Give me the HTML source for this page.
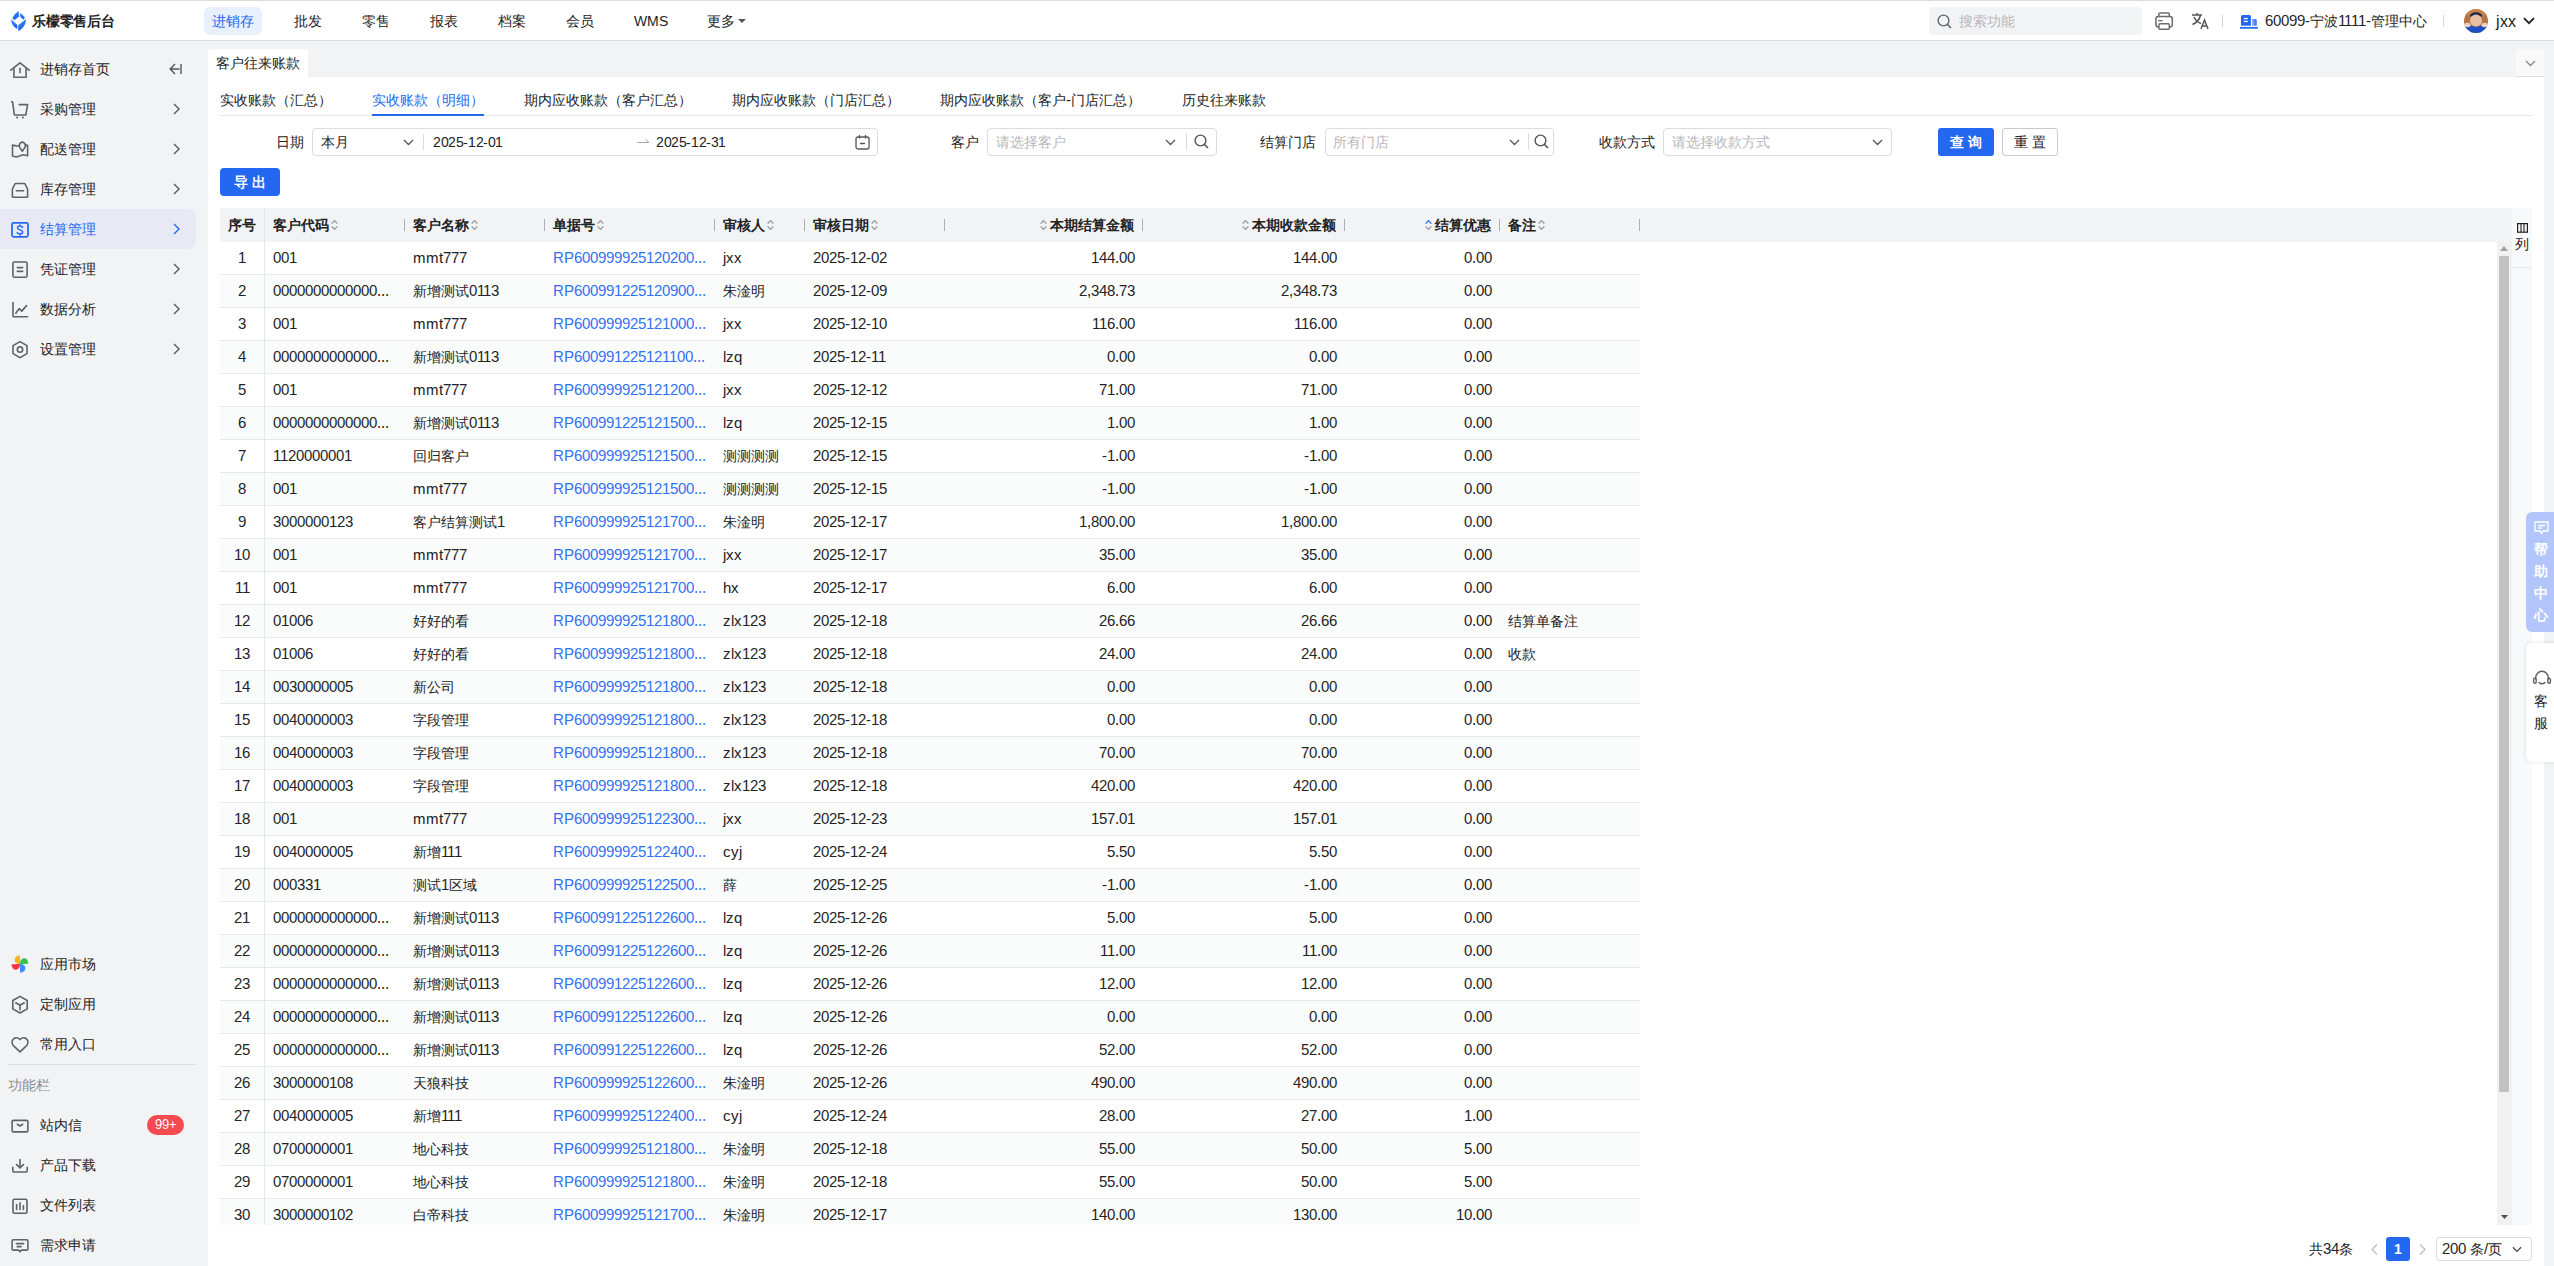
<!DOCTYPE html><html><head><meta charset="utf-8"><style>
@font-face{font-family:"Liberation Sans";src:local("Liberation Sans"),local("LiberationSans");size-adjust:107%}
@font-face{font-family:"Liberation Sans";font-weight:bold;src:local("Liberation Sans Bold"),local("LiberationSans-Bold");size-adjust:107%}
*{box-sizing:border-box;margin:0;padding:0}
html,body{width:2554px;height:1266px;overflow:hidden}
body{position:relative;background:#f2f3f5;font-family:"Liberation Sans",sans-serif;font-size:14px;color:#222;}
.a{position:absolute;white-space:nowrap}
.a>svg{display:block}
.vc{display:flex;align-items:center}
#hdr{left:0;top:0;width:2554px;height:40px;background:#fff;border-top:1px solid #dcdcdc}
#hline{left:0;top:40px;width:2554px;height:1px;background:#dcdcdc}
.nav{top:7px;height:28px;line-height:28px;font-size:14px;color:#222}
.sb{left:0;width:208px;height:40px}
.sbt{left:40px;margin-top:1px;line-height:40px;font-size:14px;color:#222}
.sbi{left:11px}
.sbc{left:173px}
.box{height:28px;border:1px solid #dcdcdc;border-radius:4px;background:#fff}
.lbl{height:28px;line-height:28px;color:#222}
.ph{color:#b8b8b8}
.th{top:208px;height:34px;line-height:34px;font-weight:bold;color:#222}
.si{position:relative;top:1px}
.rd{position:absolute;top:219px;width:1px;height:12px;background:#a9aeba}
.row{position:absolute;left:220px;width:1420px;height:33px;border-bottom:1px solid #e8e8e9}
.row.z{background:#fafbfb}
.c{position:absolute;top:0;height:32px;line-height:32px;white-space:nowrap}
.lnk{color:#2d70f3}
</style></head><body>
<div id="hdr" class="a"></div><div id="hline" class="a"></div>
<svg class="a" style="left:0;top:0" width="32" height="40" viewBox="0 0 32 40">
<defs><linearGradient id="lg" x1="0" y1="0" x2="0.4" y2="1"><stop offset="0" stop-color="#3d90f7"/><stop offset="1" stop-color="#1c5ff0"/></linearGradient></defs>
<path d="M18.6 10.9 C16 12.6 13.6 15.2 12.3 18.4 L14.6 20 L19 16.4 Z" fill="url(#lg)"/>
<path d="M20 12.9 L20 16.6 L23.3 19.8 L24.9 17.8 C23.9 15.9 22.1 14.1 20 12.9Z" fill="url(#lg)"/>
<path d="M11.1 19.3 C11.2 23.6 13.6 27 17.3 29 L17.3 25 L13.6 21.4Z" fill="url(#lg)"/>
<path d="M26 19.2 C25.9 24.4 22.9 28.6 18.2 31.1 L18.2 25.3 L23.6 21Z" fill="url(#lg)"/>
</svg>
<div class="a" style="left:32px;top:7px;line-height:28px;font-size:14px;font-weight:bold;color:#222;letter-spacing:-0.2px">乐檬零售后台</div>
<div class="a" style="left:204px;top:7px;width:58px;height:28px;background:#e8effd;border-radius:6px"></div>
<div class="a nav" style="left:212px;color:#2468f2">进销存</div>
<div class="a nav" style="left:294px;color:#222">批发</div>
<div class="a nav" style="left:362px;color:#222">零售</div>
<div class="a nav" style="left:430px;color:#222">报表</div>
<div class="a nav" style="left:498px;color:#222">档案</div>
<div class="a nav" style="left:566px;color:#222">会员</div>
<div class="a nav" style="left:634px;color:#222;font-size:13px">WMS</div>
<div class="a nav" style="left:707px;color:#222">更多</div>
<svg class="a" style="left:738px;top:19px" width="8" height="4" viewBox="0 0 8 4"><path d="M0 0 L8 0 L4 4Z" fill="#555"/></svg>
<div class="a" style="left:1929px;top:7px;width:213px;height:28px;background:#f2f3f5;border-radius:4px"></div>
<div class="a" style="left:1937px;top:14px"><svg width="15" height="15" viewBox="0 0 15 15"><circle cx="6.5" cy="6.5" r="5.4" fill="none" stroke="#666" stroke-width="1.4"/><path d="M10.4 10.4 L14 14" stroke="#666" stroke-width="1.5"/></svg></div>
<div class="a ph" style="left:1959px;top:7px;line-height:28px">搜索功能</div>
<svg class="a" style="left:2155px;top:12px" width="19" height="18" viewBox="0 0 19 18"><rect x="3.9" y="0.9" width="10.4" height="3.8" rx="1" fill="none" stroke="#6b6b6b" stroke-width="1.5"/><rect x="0.9" y="4.4" width="16.4" height="10.6" rx="2.4" fill="#fff" stroke="#6b6b6b" stroke-width="1.5"/><rect x="3.9" y="11.7" width="10.4" height="5.5" rx="1" fill="#fff" stroke="#6b6b6b" stroke-width="1.5"/><path d="M3.2 8.7 H7.6" stroke="#6b6b6b" stroke-width="1.3"/></svg>
<svg class="a" style="left:2191px;top:12px" width="19" height="18" viewBox="0 0 19 18"><path d="M1 3 H11 M6 1 V3 M9.5 3 C8.5 8 5 11 1.5 12.5 M3 5 C4.5 8.5 7 10.5 10 11.5" fill="none" stroke="#555" stroke-width="1.5"/><path d="M10 17 L13.5 8 L17 17 M11.3 14 H15.7" fill="none" stroke="#555" stroke-width="1.5"/></svg>
<div class="a" style="left:2222px;top:15px;width:1px;height:12px;background:#d5d5d5"></div>
<svg class="a" style="left:2240px;top:13px" width="18" height="16" viewBox="0 0 18 16"><defs><linearGradient id="bg2" x1="0" y1="0" x2="1" y2="0"><stop offset="0" stop-color="#8fb3f8"/><stop offset="1" stop-color="#2a6cf3"/></linearGradient></defs><path d="M1 12.8 V3.6 Q1 2.1 2.5 2.1 H9.4 Q10.9 2.1 10.9 3.6 V12.8Z" fill="#1f66f2"/><path d="M12 12.8 V6 H15.3 Q16.7 6 16.7 7.4 V12.8Z" fill="url(#bg2)"/><rect x="3.8" y="4.9" width="4" height="1.3" fill="#fff"/><rect x="3.8" y="7.8" width="4" height="1.3" fill="#fff"/><rect x="0" y="14" width="17.8" height="1.7" fill="#1f66f2"/></svg>
<div class="a" style="left:2265px;top:7px;line-height:28px;color:#222">60099-宁波1111-管理中心</div>
<div class="a" style="left:2443px;top:15px;width:1px;height:12px;background:#d5d5d5"></div>
<svg class="a" style="left:2464px;top:9px" width="24" height="24" viewBox="0 0 24 24"><defs><clipPath id="av"><circle cx="12" cy="12" r="12"/></clipPath></defs><g clip-path="url(#av)"><rect width="24" height="24" fill="#b87444"/><rect x="0" y="0" width="24" height="6" fill="#c9844e"/><path d="M6 7 C6 2 18 2 18 7 L17 8 H7Z" fill="#1e2d48"/><ellipse cx="12" cy="11.5" rx="6" ry="6" fill="#e5bfa6"/><path d="M0 18 C4 15 8 17 12 18 C16 17 20 15 24 18 V24 H0Z" fill="#1f4fc4"/><ellipse cx="3.5" cy="16" rx="3" ry="2.2" fill="#e9d2c4"/><ellipse cx="20.5" cy="16" rx="3" ry="2.2" fill="#e9d2c4"/></g></svg>
<div class="a" style="left:2496px;top:7px;line-height:28px;color:#222;font-size:15px">jxx</div>
<svg class="a" style="left:2523px;top:17px" width="12" height="8" viewBox="0 0 12 8"><path d="M1 1.2 L6 6.2 L11 1.2" fill="none" stroke="#222" stroke-width="1.8"/></svg>
<div class="a" style="left:0;top:209px;width:196px;height:40px;background:#e7eaf5;border-radius:0 8px 8px 0"></div>
<svg class="a" style="left:0;top:48px" width="40" height="40" viewBox="0 0 40 40"><path d="M10.8 22.2 L20 14.8 L29.2 22.2 M13.9 19.8 V29.2 H26.1 V19.8 M20 20.2 V24.6" fill="none" stroke="#5f626b" stroke-width="1.6" stroke-linecap="round" stroke-linejoin="round"/></svg>
<div class="a sbt" style="top:48px;color:#222">进销存首页</div>
<svg class="a" style="left:169px;top:63px" width="13" height="12" viewBox="0 0 13 12"><path d="M6 1 L1.2 6 L6 11 M1.2 6 H10.5 M12 1 V11" fill="none" stroke="#555" stroke-width="1.4"/></svg>
<svg class="a" style="left:0;top:88px" width="40" height="40" viewBox="0 0 40 40"><path d="M11.6 13.6 L12.6 14.2 L14.4 27 H25.8 L27.6 16.6 H19.2" fill="none" stroke="#5f626b" stroke-width="1.6" stroke-linecap="round" stroke-linejoin="round"/><circle cx="17.1" cy="29.5" r="1.05" fill="#5f626b"/><circle cx="22.8" cy="29.5" r="1.05" fill="#5f626b"/></svg>
<div class="a sbt" style="top:88px;color:#222">采购管理</div>
<div class="a" style="left:173px;top:103px"><svg width="7" height="12" viewBox="0 0 7 12"><path d="M1 1 L6 6 L1 11" fill="none" stroke="#555" stroke-width="1.4"/></svg></div>
<svg class="a" style="left:0;top:128px" width="40" height="40" viewBox="0 0 40 40"><path d="M19.3 17.6 C18 17.9 17.2 18.2 16.2 17.9 L12.5 17.1 V27.9 L16.3 29 L23.2 26.8 L27.6 27.7 V17.2 L25.9 17.1" fill="none" stroke="#5f626b" stroke-width="1.6" stroke-linecap="round" stroke-linejoin="round"/><path d="M22.3 23.2 L19.8 19.6 C18.9 18.2 19.2 16 20.6 14.9 C21.7 14 23 14 24.1 14.9 C25.4 16 25.7 18.2 24.8 19.6Z" fill="none" stroke="#5f626b" stroke-width="1.6" stroke-linecap="round" stroke-linejoin="round"/></svg>
<div class="a sbt" style="top:128px;color:#222">配送管理</div>
<div class="a" style="left:173px;top:143px"><svg width="7" height="12" viewBox="0 0 7 12"><path d="M1 1 L6 6 L1 11" fill="none" stroke="#555" stroke-width="1.4"/></svg></div>
<svg class="a" style="left:0;top:168px" width="40" height="40" viewBox="0 0 40 40"><path d="M15.2 15.5 H24.8 L27.6 21.2 V28.6 Q27.6 29.3 26.9 29.3 H13.1 Q12.4 29.3 12.4 28.6 V21.2Z M16.3 22.7 H23.7" fill="none" stroke="#5f626b" stroke-width="1.6" stroke-linecap="round" stroke-linejoin="round"/></svg>
<div class="a sbt" style="top:168px;color:#222">库存管理</div>
<div class="a" style="left:173px;top:183px"><svg width="7" height="12" viewBox="0 0 7 12"><path d="M1 1 L6 6 L1 11" fill="none" stroke="#555" stroke-width="1.4"/></svg></div>
<svg class="a" style="left:0;top:208px" width="40" height="40" viewBox="0 0 40 40"><rect x="12" y="14.9" width="16" height="14" rx="1.6" fill="none" stroke="#2468f2" stroke-width="1.7"/><path d="M22.6 19.4 C22.2 18.5 21.3 18.1 20 18.1 C18.4 18.1 17.5 18.8 17.5 19.9 C17.5 22.4 22.7 21.3 22.7 24.1 C22.7 25.3 21.6 25.9 20 25.9 C18.5 25.9 17.6 25.4 17.2 24.6 M20 16.9 V18.1 M20 25.9 V27.2" fill="none" stroke="#2468f2" stroke-width="1.5" stroke-linecap="round"/></svg>
<div class="a sbt" style="top:208px;color:#2468f2">结算管理</div>
<div class="a" style="left:173px;top:223px"><svg width="7" height="12" viewBox="0 0 7 12"><path d="M1 1 L6 6 L1 11" fill="none" stroke="#2468f2" stroke-width="1.4"/></svg></div>
<svg class="a" style="left:0;top:248px" width="40" height="40" viewBox="0 0 40 40"><rect x="12.9" y="14" width="14.2" height="15.2" rx="1.6" fill="none" stroke="#5f626b" stroke-width="1.6" stroke-linecap="round" stroke-linejoin="round"/><path d="M17.3 19.6 H22.7 M17.3 23.4 H22.7" fill="none" stroke="#5f626b" stroke-width="1.6" stroke-linecap="round" stroke-linejoin="round"/></svg>
<div class="a sbt" style="top:248px;color:#222">凭证管理</div>
<div class="a" style="left:173px;top:263px"><svg width="7" height="12" viewBox="0 0 7 12"><path d="M1 1 L6 6 L1 11" fill="none" stroke="#555" stroke-width="1.4"/></svg></div>
<svg class="a" style="left:0;top:288px" width="40" height="40" viewBox="0 0 40 40"><path d="M13 14.6 V27.9 Q13 28.8 13.9 28.8 H27.6 M15.8 25.2 L19.2 20.6 L21.7 23.1 L26.5 17.6" fill="none" stroke="#5f626b" stroke-width="1.6" stroke-linecap="round" stroke-linejoin="round"/></svg>
<div class="a sbt" style="top:288px;color:#222">数据分析</div>
<div class="a" style="left:173px;top:303px"><svg width="7" height="12" viewBox="0 0 7 12"><path d="M1 1 L6 6 L1 11" fill="none" stroke="#555" stroke-width="1.4"/></svg></div>
<svg class="a" style="left:0;top:328px" width="40" height="40" viewBox="0 0 40 40"><path d="M20 13.6 L27 17.6 V25.6 L20 29.6 L13 25.6 V17.6Z" fill="none" stroke="#5f626b" stroke-width="1.6" stroke-linecap="round" stroke-linejoin="round"/><circle cx="20" cy="21.6" r="2.7" fill="none" stroke="#5f626b" stroke-width="1.6" stroke-linecap="round" stroke-linejoin="round"/></svg>
<div class="a sbt" style="top:328px;color:#222">设置管理</div>
<div class="a" style="left:173px;top:343px"><svg width="7" height="12" viewBox="0 0 7 12"><path d="M1 1 L6 6 L1 11" fill="none" stroke="#555" stroke-width="1.4"/></svg></div>
<svg class="a" style="left:0;top:943px" width="40" height="40" viewBox="0 0 40 40"><path d="M20 21 C17 21 14.6 19.5 14.6 16.8 C14.6 14.2 16.8 12.6 19.6 12.3 C20.2 15 20.3 18 20 21Z" fill="#fbb21f"/><path d="M20 21 C20 18 21.6 15.3 24.4 15.3 C26.7 15.3 28 17.3 28.3 20.6 C25.6 21.1 22.7 21.2 20 21Z" fill="#33c24a"/><path d="M20 21 C20 24 18.4 26.7 15.6 26.7 C13.3 26.7 11.8 24.6 11.3 21.5 C14.2 21 17.2 20.8 20 21Z" fill="#f5333f"/><path d="M20 21 C23 21 25.4 22.5 25.4 25.2 C25.4 27.8 23.2 29.4 20.4 29.7 C19.8 27 19.7 24 20 21Z" fill="#3b8cff"/></svg>
<div class="a sbt" style="top:943px">应用市场</div>
<svg class="a" style="left:0;top:983px" width="40" height="40" viewBox="0 0 40 40"><path d="M20 13.4 L27.2 17.5 V25.9 L20 30 L12.8 25.9 V17.5Z M15.8 19.8 L20 22.3 L24.2 19.8 M20 22.3 V26.8" fill="none" stroke="#5f626b" stroke-width="1.6" stroke-linecap="round" stroke-linejoin="round"/></svg>
<div class="a sbt" style="top:983px">定制应用</div>
<svg class="a" style="left:0;top:1023px" width="40" height="40" viewBox="0 0 40 40"><path d="M20 28.8 L13.4 22.6 C11.6 20.8 11.6 17.6 13.5 15.9 C15.4 14.2 18.3 14.5 20 16.6 C21.7 14.5 24.6 14.2 26.5 15.9 C28.4 17.6 28.4 20.8 26.6 22.6Z" fill="none" stroke="#5f626b" stroke-width="1.6" stroke-linecap="round" stroke-linejoin="round"/></svg>
<div class="a sbt" style="top:1023px">常用入口</div>
<svg class="a" style="left:0;top:1104px" width="40" height="40" viewBox="0 0 40 40"><rect x="12.1" y="16.4" width="15.8" height="11.5" rx="1.2" fill="none" stroke="#5f626b" stroke-width="1.6" stroke-linecap="round" stroke-linejoin="round"/><path d="M17.3 20.3 L20 22 L22.7 20.3" fill="none" stroke="#5f626b" stroke-width="1.6" stroke-linecap="round" stroke-linejoin="round"/></svg>
<div class="a sbt" style="top:1104px">站内信</div>
<svg class="a" style="left:0;top:1144px" width="40" height="40" viewBox="0 0 40 40"><path d="M20 15.6 V23.6 M16.6 20.6 L20 23.8 L23.4 20.6 M12.8 23.2 V27 Q12.8 28 13.8 28 H26.2 Q27.2 28 27.2 27 V23.2" fill="none" stroke="#5f626b" stroke-width="1.6" stroke-linecap="round" stroke-linejoin="round"/></svg>
<div class="a sbt" style="top:1144px">产品下载</div>
<svg class="a" style="left:0;top:1184px" width="40" height="40" viewBox="0 0 40 40"><rect x="13" y="15.2" width="14" height="14" rx="1.4" fill="none" stroke="#5f626b" stroke-width="1.6" stroke-linecap="round" stroke-linejoin="round"/><path d="M16.6 20.6 V25.4 M20 18.8 V25.4 M23.4 21.8 V25.4" fill="none" stroke="#5f626b" stroke-width="1.6" stroke-linecap="round" stroke-linejoin="round"/></svg>
<div class="a sbt" style="top:1184px">文件列表</div>
<svg class="a" style="left:0;top:1224px" width="40" height="40" viewBox="0 0 40 40"><path d="M13.3 15.8 H26.7 Q27.9 15.8 27.9 17 V24.9 Q27.9 26.1 26.7 26.1 H21.4 L20 27.8 L18.6 26.1 H13.3 Q12.1 26.1 12.1 24.9 V17 Q12.1 15.8 13.3 15.8Z M16.4 19.6 H23.6 M17.2 22.6 H21.2" fill="none" stroke="#5f626b" stroke-width="1.6" stroke-linecap="round" stroke-linejoin="round"/></svg>
<div class="a sbt" style="top:1224px">需求申请</div>
<div class="a" style="left:8px;top:1064px;width:188px;height:1px;background:#dcdee2"></div>
<div class="a" style="left:8px;top:1075px;line-height:20px;font-size:14px;color:#8a8d93">功能栏</div>
<div class="a" style="left:147px;top:1115px;width:37px;height:20px;border-radius:10px;background:#f54a50;color:#fff;font-size:12px;line-height:20px;text-align:center">99+</div>
<div class="a" style="left:208px;top:49px;width:100px;height:28px;background:#fff;border-radius:4px 4px 0 0"></div>
<div class="a" style="left:216px;top:49px;line-height:28px;color:#222">客户往来账款</div>
<div class="a" style="left:2516px;top:49px;width:28px;height:28px;background:#f9f9f9;border-radius:4px 4px 0 0;border-bottom:1px solid #dedede"></div>
<div class="a" style="left:2525px;top:60px"><svg width="11" height="7" viewBox="0 0 11 7"><path d="M1 1 L5.5 5.5 L10 1" fill="none" stroke="#888" stroke-width="1.3"/></svg></div>
<div class="a" style="left:208px;top:77px;width:2336px;height:1189px;background:#fff"></div>
<div class="a" style="left:220px;top:115px;width:2312px;height:1px;background:#e4e6ea"></div>
<div class="a" style="left:220px;top:86px;line-height:28px;color:#222">实收账款（汇总）</div>
<div class="a" style="left:372px;top:86px;line-height:28px;color:#2468f2">实收账款（明细）</div>
<div class="a" style="left:524px;top:86px;line-height:28px;color:#222">期内应收账款（客户汇总）</div>
<div class="a" style="left:732px;top:86px;line-height:28px;color:#222">期内应收账款（门店汇总）</div>
<div class="a" style="left:940px;top:86px;line-height:28px;color:#222">期内应收账款（客户-门店汇总）</div>
<div class="a" style="left:1182px;top:86px;line-height:28px;color:#222">历史往来账款</div>
<div class="a" style="left:372px;top:114px;width:112px;height:2px;background:#2468f2"></div>
<div class="a lbl" style="left:104px;width:200px;top:128px;text-align:right">日期</div>
<div class="a box" style="left:312px;top:128px;width:566px"></div>
<div class="a" style="left:321px;top:128px;line-height:28px">本月</div>
<div class="a" style="left:403px;top:139px"><svg width="11" height="7" viewBox="0 0 11 7"><path d="M1 1 L5.5 5.5 L10 1" fill="none" stroke="#555" stroke-width="1.3"/></svg></div>
<div class="a" style="left:423px;top:134px;width:1px;height:16px;background:#dcdcdc"></div>
<div class="a" style="left:433px;top:128px;line-height:28px;font-size:13px;letter-spacing:-0.4px">2025-12-01</div>
<svg class="a" style="left:637px;top:138px" width="13" height="6" viewBox="0 0 13 6"><path d="M0 4.5 H12 L8.5 1.5" fill="none" stroke="#aaa" stroke-width="1"/></svg>
<div class="a" style="left:656px;top:128px;line-height:28px;font-size:13px;letter-spacing:-0.4px">2025-12-31</div>
<svg class="a" style="left:855px;top:134px" width="15" height="16" viewBox="0 0 15 16"><rect x="1" y="3" width="13" height="12" rx="2" fill="none" stroke="#555" stroke-width="1.3"/><path d="M4.5 1 V4.5 M10.5 1 V4.5 M5 9.5 H10" stroke="#555" stroke-width="1.3"/></svg>
<div class="a lbl" style="left:779px;width:200px;top:128px;text-align:right">客户</div>
<div class="a box" style="left:987px;top:128px;width:230px"></div>
<div class="a ph" style="left:996px;top:128px;line-height:28px">请选择客户</div>
<div class="a" style="left:1165px;top:139px"><svg width="11" height="7" viewBox="0 0 11 7"><path d="M1 1 L5.5 5.5 L10 1" fill="none" stroke="#555" stroke-width="1.3"/></svg></div>
<div class="a" style="left:1186px;top:133px;width:1px;height:17px;background:#dcdcdc"></div>
<div class="a" style="left:1194px;top:134px"><svg width="15" height="15" viewBox="0 0 15 15"><circle cx="6.5" cy="6.5" r="5.4" fill="none" stroke="#555" stroke-width="1.4"/><path d="M10.4 10.4 L14 14" stroke="#555" stroke-width="1.5"/></svg></div>
<div class="a lbl" style="left:1116px;width:200px;top:128px;text-align:right">结算门店</div>
<div class="a box" style="left:1325px;top:128px;width:229px"></div>
<div class="a ph" style="left:1333px;top:128px;line-height:28px">所有门店</div>
<div class="a" style="left:1509px;top:139px"><svg width="11" height="7" viewBox="0 0 11 7"><path d="M1 1 L5.5 5.5 L10 1" fill="none" stroke="#555" stroke-width="1.3"/></svg></div>
<div class="a" style="left:1528px;top:133px;width:1px;height:17px;background:#dcdcdc"></div>
<div class="a" style="left:1534px;top:134px"><svg width="15" height="15" viewBox="0 0 15 15"><circle cx="6.5" cy="6.5" r="5.4" fill="none" stroke="#555" stroke-width="1.4"/><path d="M10.4 10.4 L14 14" stroke="#555" stroke-width="1.5"/></svg></div>
<div class="a lbl" style="left:1455px;width:200px;top:128px;text-align:right">收款方式</div>
<div class="a box" style="left:1663px;top:128px;width:229px"></div>
<div class="a ph" style="left:1672px;top:128px;line-height:28px">请选择收款方式</div>
<div class="a" style="left:1872px;top:139px"><svg width="11" height="7" viewBox="0 0 11 7"><path d="M1 1 L5.5 5.5 L10 1" fill="none" stroke="#555" stroke-width="1.3"/></svg></div>
<div class="a" style="left:1938px;top:128px;width:56px;height:28px;background:#2468f2;border-radius:3px;color:#fff;line-height:28px;text-align:center;letter-spacing:4px;text-indent:4px;font-weight:bold">查询</div>
<div class="a" style="left:2002px;top:128px;width:56px;height:28px;background:#fff;border:1px solid #c9c9c9;border-radius:3px;color:#222;line-height:26px;text-align:center;letter-spacing:4px;text-indent:4px">重置</div>
<div class="a" style="left:220px;top:168px;width:60px;height:28px;background:#2468f2;border-radius:4px;color:#fff;line-height:28px;text-align:center;letter-spacing:4px;text-indent:4px;font-weight:bold">导出</div>
<div class="a" style="left:220px;top:208px;width:2292px;height:34px;background:#f2f3f5"></div>
<div class="a" style="left:2512px;top:208px;width:20px;height:1017px;background:#f8f9fb"></div>
<div class="a" style="left:2512px;top:267px;width:20px;height:1px;background:#e8e9ec"></div>
<svg class="a" style="left:2517px;top:223px" width="11" height="10" viewBox="0 0 11 10"><rect x="0.6" y="0.6" width="9.8" height="8.6" fill="none" stroke="#222" stroke-width="1.2"/><path d="M4 1 V9 M7 1 V9" stroke="#222" stroke-width="1.1"/></svg>
<div class="a" style="left:2515px;top:235px;line-height:18px;font-size:14px;color:#222">列</div>
<div class="a th" style="left:220px;width:44px;text-align:center">序号</div>
<div class="a th" style="left:273px">客户代码<span style="margin-left:2px"><svg class="si" width="7" height="12" viewBox="0 0 7 12"><path d="M0.6 4.6 L3.5 1.6 L6.4 4.6" fill="none" stroke="#959595" stroke-width="1.3"/><path d="M0.6 7.4 L3.5 10.4 L6.4 7.4" fill="none" stroke="#959595" stroke-width="1.3"/></svg></span></div>
<div class="a th" style="left:413px">客户名称<span style="margin-left:2px"><svg class="si" width="7" height="12" viewBox="0 0 7 12"><path d="M0.6 4.6 L3.5 1.6 L6.4 4.6" fill="none" stroke="#959595" stroke-width="1.3"/><path d="M0.6 7.4 L3.5 10.4 L6.4 7.4" fill="none" stroke="#959595" stroke-width="1.3"/></svg></span></div>
<div class="a th" style="left:553px">单据号<span style="margin-left:2px"><svg class="si" width="7" height="12" viewBox="0 0 7 12"><path d="M0.6 4.6 L3.5 1.6 L6.4 4.6" fill="none" stroke="#959595" stroke-width="1.3"/><path d="M0.6 7.4 L3.5 10.4 L6.4 7.4" fill="none" stroke="#959595" stroke-width="1.3"/></svg></span></div>
<div class="a th" style="left:723px">审核人<span style="margin-left:2px"><svg class="si" width="7" height="12" viewBox="0 0 7 12"><path d="M0.6 4.6 L3.5 1.6 L6.4 4.6" fill="none" stroke="#959595" stroke-width="1.3"/><path d="M0.6 7.4 L3.5 10.4 L6.4 7.4" fill="none" stroke="#959595" stroke-width="1.3"/></svg></span></div>
<div class="a th" style="left:813px">审核日期<span style="margin-left:2px"><svg class="si" width="7" height="12" viewBox="0 0 7 12"><path d="M0.6 4.6 L3.5 1.6 L6.4 4.6" fill="none" stroke="#959595" stroke-width="1.3"/><path d="M0.6 7.4 L3.5 10.4 L6.4 7.4" fill="none" stroke="#959595" stroke-width="1.3"/></svg></span></div>
<div class="a th" style="left:944px;width:190px;text-align:right"><span style="margin-right:3px"><svg class="si" width="7" height="12" viewBox="0 0 7 12"><path d="M0.6 4.6 L3.5 1.6 L6.4 4.6" fill="none" stroke="#959595" stroke-width="1.3"/><path d="M0.6 7.4 L3.5 10.4 L6.4 7.4" fill="none" stroke="#959595" stroke-width="1.3"/></svg></span>本期结算金额</div>
<div class="a th" style="left:1142px;width:194px;text-align:right"><span style="margin-right:3px"><svg class="si" width="7" height="12" viewBox="0 0 7 12"><path d="M0.6 4.6 L3.5 1.6 L6.4 4.6" fill="none" stroke="#959595" stroke-width="1.3"/><path d="M0.6 7.4 L3.5 10.4 L6.4 7.4" fill="none" stroke="#959595" stroke-width="1.3"/></svg></span>本期收款金额</div>
<div class="a th" style="left:1344px;width:147px;text-align:right"><span style="margin-right:3px"><svg class="si" width="7" height="12" viewBox="0 0 7 12"><path d="M0.6 4.6 L3.5 1.6 L6.4 4.6" fill="none" stroke="#2468f2" stroke-width="1.3"/><path d="M0.6 7.4 L3.5 10.4 L6.4 7.4" fill="none" stroke="#959595" stroke-width="1.3"/></svg></span>结算优惠</div>
<div class="a th" style="left:1508px">备注<span style="margin-left:2px"><svg class="si" width="7" height="12" viewBox="0 0 7 12"><path d="M0.6 4.6 L3.5 1.6 L6.4 4.6" fill="none" stroke="#959595" stroke-width="1.3"/><path d="M0.6 7.4 L3.5 10.4 L6.4 7.4" fill="none" stroke="#959595" stroke-width="1.3"/></svg></span></div>
<div class="rd" style="left:404px"></div>
<div class="rd" style="left:544px"></div>
<div class="rd" style="left:714px"></div>
<div class="rd" style="left:804px"></div>
<div class="rd" style="left:944px"></div>
<div class="rd" style="left:1142px"></div>
<div class="rd" style="left:1344px"></div>
<div class="rd" style="left:1499px"></div>
<div class="rd" style="left:1639px"></div>
<div class="a" style="left:0;top:242px;width:2554px;height:983px;overflow:hidden">
<div class="row" style="left:220px;top:0px"><div class="c" style="left:0;width:44px;text-align:center">1</div><div class="c" style="left:53px">001</div><div class="c" style="left:193px">mmt777</div><div class="c lnk" style="left:333px">RP600999925120200...</div><div class="c" style="left:503px">jxx</div><div class="c" style="left:593px">2025-12-02</div><div class="c" style="left:724px;width:191px;text-align:right">144.00</div><div class="c" style="left:922px;width:195px;text-align:right">144.00</div><div class="c" style="left:1124px;width:148px;text-align:right">0.00</div></div>
<div class="row z" style="left:220px;top:33px"><div class="c" style="left:0;width:44px;text-align:center">2</div><div class="c" style="left:53px">0000000000000...</div><div class="c" style="left:193px">新增测试0113</div><div class="c lnk" style="left:333px">RP600991225120900...</div><div class="c" style="left:503px">朱淦明</div><div class="c" style="left:593px">2025-12-09</div><div class="c" style="left:724px;width:191px;text-align:right">2,348.73</div><div class="c" style="left:922px;width:195px;text-align:right">2,348.73</div><div class="c" style="left:1124px;width:148px;text-align:right">0.00</div></div>
<div class="row" style="left:220px;top:66px"><div class="c" style="left:0;width:44px;text-align:center">3</div><div class="c" style="left:53px">001</div><div class="c" style="left:193px">mmt777</div><div class="c lnk" style="left:333px">RP600999925121000...</div><div class="c" style="left:503px">jxx</div><div class="c" style="left:593px">2025-12-10</div><div class="c" style="left:724px;width:191px;text-align:right">116.00</div><div class="c" style="left:922px;width:195px;text-align:right">116.00</div><div class="c" style="left:1124px;width:148px;text-align:right">0.00</div></div>
<div class="row z" style="left:220px;top:99px"><div class="c" style="left:0;width:44px;text-align:center">4</div><div class="c" style="left:53px">0000000000000...</div><div class="c" style="left:193px">新增测试0113</div><div class="c lnk" style="left:333px">RP600991225121100...</div><div class="c" style="left:503px">lzq</div><div class="c" style="left:593px">2025-12-11</div><div class="c" style="left:724px;width:191px;text-align:right">0.00</div><div class="c" style="left:922px;width:195px;text-align:right">0.00</div><div class="c" style="left:1124px;width:148px;text-align:right">0.00</div></div>
<div class="row" style="left:220px;top:132px"><div class="c" style="left:0;width:44px;text-align:center">5</div><div class="c" style="left:53px">001</div><div class="c" style="left:193px">mmt777</div><div class="c lnk" style="left:333px">RP600999925121200...</div><div class="c" style="left:503px">jxx</div><div class="c" style="left:593px">2025-12-12</div><div class="c" style="left:724px;width:191px;text-align:right">71.00</div><div class="c" style="left:922px;width:195px;text-align:right">71.00</div><div class="c" style="left:1124px;width:148px;text-align:right">0.00</div></div>
<div class="row z" style="left:220px;top:165px"><div class="c" style="left:0;width:44px;text-align:center">6</div><div class="c" style="left:53px">0000000000000...</div><div class="c" style="left:193px">新增测试0113</div><div class="c lnk" style="left:333px">RP600991225121500...</div><div class="c" style="left:503px">lzq</div><div class="c" style="left:593px">2025-12-15</div><div class="c" style="left:724px;width:191px;text-align:right">1.00</div><div class="c" style="left:922px;width:195px;text-align:right">1.00</div><div class="c" style="left:1124px;width:148px;text-align:right">0.00</div></div>
<div class="row" style="left:220px;top:198px"><div class="c" style="left:0;width:44px;text-align:center">7</div><div class="c" style="left:53px">1120000001</div><div class="c" style="left:193px">回归客户</div><div class="c lnk" style="left:333px">RP600999925121500...</div><div class="c" style="left:503px">测测测测</div><div class="c" style="left:593px">2025-12-15</div><div class="c" style="left:724px;width:191px;text-align:right">-1.00</div><div class="c" style="left:922px;width:195px;text-align:right">-1.00</div><div class="c" style="left:1124px;width:148px;text-align:right">0.00</div></div>
<div class="row z" style="left:220px;top:231px"><div class="c" style="left:0;width:44px;text-align:center">8</div><div class="c" style="left:53px">001</div><div class="c" style="left:193px">mmt777</div><div class="c lnk" style="left:333px">RP600999925121500...</div><div class="c" style="left:503px">测测测测</div><div class="c" style="left:593px">2025-12-15</div><div class="c" style="left:724px;width:191px;text-align:right">-1.00</div><div class="c" style="left:922px;width:195px;text-align:right">-1.00</div><div class="c" style="left:1124px;width:148px;text-align:right">0.00</div></div>
<div class="row" style="left:220px;top:264px"><div class="c" style="left:0;width:44px;text-align:center">9</div><div class="c" style="left:53px">3000000123</div><div class="c" style="left:193px">客户结算测试1</div><div class="c lnk" style="left:333px">RP600999925121700...</div><div class="c" style="left:503px">朱淦明</div><div class="c" style="left:593px">2025-12-17</div><div class="c" style="left:724px;width:191px;text-align:right">1,800.00</div><div class="c" style="left:922px;width:195px;text-align:right">1,800.00</div><div class="c" style="left:1124px;width:148px;text-align:right">0.00</div></div>
<div class="row z" style="left:220px;top:297px"><div class="c" style="left:0;width:44px;text-align:center">10</div><div class="c" style="left:53px">001</div><div class="c" style="left:193px">mmt777</div><div class="c lnk" style="left:333px">RP600999925121700...</div><div class="c" style="left:503px">jxx</div><div class="c" style="left:593px">2025-12-17</div><div class="c" style="left:724px;width:191px;text-align:right">35.00</div><div class="c" style="left:922px;width:195px;text-align:right">35.00</div><div class="c" style="left:1124px;width:148px;text-align:right">0.00</div></div>
<div class="row" style="left:220px;top:330px"><div class="c" style="left:0;width:44px;text-align:center">11</div><div class="c" style="left:53px">001</div><div class="c" style="left:193px">mmt777</div><div class="c lnk" style="left:333px">RP600999925121700...</div><div class="c" style="left:503px">hx</div><div class="c" style="left:593px">2025-12-17</div><div class="c" style="left:724px;width:191px;text-align:right">6.00</div><div class="c" style="left:922px;width:195px;text-align:right">6.00</div><div class="c" style="left:1124px;width:148px;text-align:right">0.00</div></div>
<div class="row z" style="left:220px;top:363px"><div class="c" style="left:0;width:44px;text-align:center">12</div><div class="c" style="left:53px">01006</div><div class="c" style="left:193px">好好的看</div><div class="c lnk" style="left:333px">RP600999925121800...</div><div class="c" style="left:503px">zlx123</div><div class="c" style="left:593px">2025-12-18</div><div class="c" style="left:724px;width:191px;text-align:right">26.66</div><div class="c" style="left:922px;width:195px;text-align:right">26.66</div><div class="c" style="left:1124px;width:148px;text-align:right">0.00</div><div class="c" style="left:1288px">结算单备注</div></div>
<div class="row" style="left:220px;top:396px"><div class="c" style="left:0;width:44px;text-align:center">13</div><div class="c" style="left:53px">01006</div><div class="c" style="left:193px">好好的看</div><div class="c lnk" style="left:333px">RP600999925121800...</div><div class="c" style="left:503px">zlx123</div><div class="c" style="left:593px">2025-12-18</div><div class="c" style="left:724px;width:191px;text-align:right">24.00</div><div class="c" style="left:922px;width:195px;text-align:right">24.00</div><div class="c" style="left:1124px;width:148px;text-align:right">0.00</div><div class="c" style="left:1288px">收款</div></div>
<div class="row z" style="left:220px;top:429px"><div class="c" style="left:0;width:44px;text-align:center">14</div><div class="c" style="left:53px">0030000005</div><div class="c" style="left:193px">新公司</div><div class="c lnk" style="left:333px">RP600999925121800...</div><div class="c" style="left:503px">zlx123</div><div class="c" style="left:593px">2025-12-18</div><div class="c" style="left:724px;width:191px;text-align:right">0.00</div><div class="c" style="left:922px;width:195px;text-align:right">0.00</div><div class="c" style="left:1124px;width:148px;text-align:right">0.00</div></div>
<div class="row" style="left:220px;top:462px"><div class="c" style="left:0;width:44px;text-align:center">15</div><div class="c" style="left:53px">0040000003</div><div class="c" style="left:193px">字段管理</div><div class="c lnk" style="left:333px">RP600999925121800...</div><div class="c" style="left:503px">zlx123</div><div class="c" style="left:593px">2025-12-18</div><div class="c" style="left:724px;width:191px;text-align:right">0.00</div><div class="c" style="left:922px;width:195px;text-align:right">0.00</div><div class="c" style="left:1124px;width:148px;text-align:right">0.00</div></div>
<div class="row z" style="left:220px;top:495px"><div class="c" style="left:0;width:44px;text-align:center">16</div><div class="c" style="left:53px">0040000003</div><div class="c" style="left:193px">字段管理</div><div class="c lnk" style="left:333px">RP600999925121800...</div><div class="c" style="left:503px">zlx123</div><div class="c" style="left:593px">2025-12-18</div><div class="c" style="left:724px;width:191px;text-align:right">70.00</div><div class="c" style="left:922px;width:195px;text-align:right">70.00</div><div class="c" style="left:1124px;width:148px;text-align:right">0.00</div></div>
<div class="row" style="left:220px;top:528px"><div class="c" style="left:0;width:44px;text-align:center">17</div><div class="c" style="left:53px">0040000003</div><div class="c" style="left:193px">字段管理</div><div class="c lnk" style="left:333px">RP600999925121800...</div><div class="c" style="left:503px">zlx123</div><div class="c" style="left:593px">2025-12-18</div><div class="c" style="left:724px;width:191px;text-align:right">420.00</div><div class="c" style="left:922px;width:195px;text-align:right">420.00</div><div class="c" style="left:1124px;width:148px;text-align:right">0.00</div></div>
<div class="row z" style="left:220px;top:561px"><div class="c" style="left:0;width:44px;text-align:center">18</div><div class="c" style="left:53px">001</div><div class="c" style="left:193px">mmt777</div><div class="c lnk" style="left:333px">RP600999925122300...</div><div class="c" style="left:503px">jxx</div><div class="c" style="left:593px">2025-12-23</div><div class="c" style="left:724px;width:191px;text-align:right">157.01</div><div class="c" style="left:922px;width:195px;text-align:right">157.01</div><div class="c" style="left:1124px;width:148px;text-align:right">0.00</div></div>
<div class="row" style="left:220px;top:594px"><div class="c" style="left:0;width:44px;text-align:center">19</div><div class="c" style="left:53px">0040000005</div><div class="c" style="left:193px">新增111</div><div class="c lnk" style="left:333px">RP600999925122400...</div><div class="c" style="left:503px">cyj</div><div class="c" style="left:593px">2025-12-24</div><div class="c" style="left:724px;width:191px;text-align:right">5.50</div><div class="c" style="left:922px;width:195px;text-align:right">5.50</div><div class="c" style="left:1124px;width:148px;text-align:right">0.00</div></div>
<div class="row z" style="left:220px;top:627px"><div class="c" style="left:0;width:44px;text-align:center">20</div><div class="c" style="left:53px">000331</div><div class="c" style="left:193px">测试1区域</div><div class="c lnk" style="left:333px">RP600999925122500...</div><div class="c" style="left:503px">薛</div><div class="c" style="left:593px">2025-12-25</div><div class="c" style="left:724px;width:191px;text-align:right">-1.00</div><div class="c" style="left:922px;width:195px;text-align:right">-1.00</div><div class="c" style="left:1124px;width:148px;text-align:right">0.00</div></div>
<div class="row" style="left:220px;top:660px"><div class="c" style="left:0;width:44px;text-align:center">21</div><div class="c" style="left:53px">0000000000000...</div><div class="c" style="left:193px">新增测试0113</div><div class="c lnk" style="left:333px">RP600991225122600...</div><div class="c" style="left:503px">lzq</div><div class="c" style="left:593px">2025-12-26</div><div class="c" style="left:724px;width:191px;text-align:right">5.00</div><div class="c" style="left:922px;width:195px;text-align:right">5.00</div><div class="c" style="left:1124px;width:148px;text-align:right">0.00</div></div>
<div class="row z" style="left:220px;top:693px"><div class="c" style="left:0;width:44px;text-align:center">22</div><div class="c" style="left:53px">0000000000000...</div><div class="c" style="left:193px">新增测试0113</div><div class="c lnk" style="left:333px">RP600991225122600...</div><div class="c" style="left:503px">lzq</div><div class="c" style="left:593px">2025-12-26</div><div class="c" style="left:724px;width:191px;text-align:right">11.00</div><div class="c" style="left:922px;width:195px;text-align:right">11.00</div><div class="c" style="left:1124px;width:148px;text-align:right">0.00</div></div>
<div class="row" style="left:220px;top:726px"><div class="c" style="left:0;width:44px;text-align:center">23</div><div class="c" style="left:53px">0000000000000...</div><div class="c" style="left:193px">新增测试0113</div><div class="c lnk" style="left:333px">RP600991225122600...</div><div class="c" style="left:503px">lzq</div><div class="c" style="left:593px">2025-12-26</div><div class="c" style="left:724px;width:191px;text-align:right">12.00</div><div class="c" style="left:922px;width:195px;text-align:right">12.00</div><div class="c" style="left:1124px;width:148px;text-align:right">0.00</div></div>
<div class="row z" style="left:220px;top:759px"><div class="c" style="left:0;width:44px;text-align:center">24</div><div class="c" style="left:53px">0000000000000...</div><div class="c" style="left:193px">新增测试0113</div><div class="c lnk" style="left:333px">RP600991225122600...</div><div class="c" style="left:503px">lzq</div><div class="c" style="left:593px">2025-12-26</div><div class="c" style="left:724px;width:191px;text-align:right">0.00</div><div class="c" style="left:922px;width:195px;text-align:right">0.00</div><div class="c" style="left:1124px;width:148px;text-align:right">0.00</div></div>
<div class="row" style="left:220px;top:792px"><div class="c" style="left:0;width:44px;text-align:center">25</div><div class="c" style="left:53px">0000000000000...</div><div class="c" style="left:193px">新增测试0113</div><div class="c lnk" style="left:333px">RP600991225122600...</div><div class="c" style="left:503px">lzq</div><div class="c" style="left:593px">2025-12-26</div><div class="c" style="left:724px;width:191px;text-align:right">52.00</div><div class="c" style="left:922px;width:195px;text-align:right">52.00</div><div class="c" style="left:1124px;width:148px;text-align:right">0.00</div></div>
<div class="row z" style="left:220px;top:825px"><div class="c" style="left:0;width:44px;text-align:center">26</div><div class="c" style="left:53px">3000000108</div><div class="c" style="left:193px">天狼科技</div><div class="c lnk" style="left:333px">RP600999925122600...</div><div class="c" style="left:503px">朱淦明</div><div class="c" style="left:593px">2025-12-26</div><div class="c" style="left:724px;width:191px;text-align:right">490.00</div><div class="c" style="left:922px;width:195px;text-align:right">490.00</div><div class="c" style="left:1124px;width:148px;text-align:right">0.00</div></div>
<div class="row" style="left:220px;top:858px"><div class="c" style="left:0;width:44px;text-align:center">27</div><div class="c" style="left:53px">0040000005</div><div class="c" style="left:193px">新增111</div><div class="c lnk" style="left:333px">RP600999925122400...</div><div class="c" style="left:503px">cyj</div><div class="c" style="left:593px">2025-12-24</div><div class="c" style="left:724px;width:191px;text-align:right">28.00</div><div class="c" style="left:922px;width:195px;text-align:right">27.00</div><div class="c" style="left:1124px;width:148px;text-align:right">1.00</div></div>
<div class="row z" style="left:220px;top:891px"><div class="c" style="left:0;width:44px;text-align:center">28</div><div class="c" style="left:53px">0700000001</div><div class="c" style="left:193px">地心科技</div><div class="c lnk" style="left:333px">RP600999925121800...</div><div class="c" style="left:503px">朱淦明</div><div class="c" style="left:593px">2025-12-18</div><div class="c" style="left:724px;width:191px;text-align:right">55.00</div><div class="c" style="left:922px;width:195px;text-align:right">50.00</div><div class="c" style="left:1124px;width:148px;text-align:right">5.00</div></div>
<div class="row" style="left:220px;top:924px"><div class="c" style="left:0;width:44px;text-align:center">29</div><div class="c" style="left:53px">0700000001</div><div class="c" style="left:193px">地心科技</div><div class="c lnk" style="left:333px">RP600999925121800...</div><div class="c" style="left:503px">朱淦明</div><div class="c" style="left:593px">2025-12-18</div><div class="c" style="left:724px;width:191px;text-align:right">55.00</div><div class="c" style="left:922px;width:195px;text-align:right">50.00</div><div class="c" style="left:1124px;width:148px;text-align:right">5.00</div></div>
<div class="row z" style="left:220px;top:957px"><div class="c" style="left:0;width:44px;text-align:center">30</div><div class="c" style="left:53px">3000000102</div><div class="c" style="left:193px">白帝科技</div><div class="c lnk" style="left:333px">RP600999925121700...</div><div class="c" style="left:503px">朱淦明</div><div class="c" style="left:593px">2025-12-17</div><div class="c" style="left:724px;width:191px;text-align:right">140.00</div><div class="c" style="left:922px;width:195px;text-align:right">130.00</div><div class="c" style="left:1124px;width:148px;text-align:right">10.00</div></div>
</div>
<div class="a" style="left:264px;top:208px;width:1px;height:1017px;background:#e6e7ea"></div>
<div class="a" style="left:2497px;top:242px;width:15px;height:983px;background:#f1f1f1"></div>
<div class="a" style="left:2499px;top:256px;width:10px;height:836px;background:#c1c1c1"></div>
<svg class="a" style="left:2500px;top:246px" width="8" height="5" viewBox="0 0 8 5"><path d="M0 5 L4 0 L8 5Z" fill="#a3a3a3"/></svg>
<svg class="a" style="left:2501px;top:1215px" width="7" height="4" viewBox="0 0 7 4"><path d="M0 0 L3.5 4 L7 0Z" fill="#505050"/></svg>
<div class="a" style="left:2309px;top:1237px;line-height:24px;color:#222">共34条</div>
<svg class="a" style="left:2371px;top:1244px" width="7" height="11" viewBox="0 0 7 11"><path d="M6 0.5 L1 5.5 L6 10.5" fill="none" stroke="#bbb" stroke-width="1.2"/></svg>
<div class="a" style="left:2386px;top:1237px;width:24px;height:24px;background:#2468f2;border-radius:3px;color:#fff;line-height:24px;text-align:center;font-size:13px;font-weight:bold">1</div>
<svg class="a" style="left:2419px;top:1244px" width="7" height="11" viewBox="0 0 7 11"><path d="M1 0.5 L6 5.5 L1 10.5" fill="none" stroke="#bbb" stroke-width="1.2"/></svg>
<div class="a" style="left:2436px;top:1237px;width:96px;height:24px;border:1px solid #dcdcdc;border-radius:3px"></div>
<div class="a" style="left:2442px;top:1237px;line-height:24px;color:#222">200 条/页</div>
<div class="a" style="left:2512px;top:1246px"><svg width="10" height="7" viewBox="0 0 11 7"><path d="M1 1 L5.5 5.5 L10 1" fill="none" stroke="#444" stroke-width="1.3"/></svg></div>
<div class="a" style="left:2526px;top:512px;width:40px;height:120px;background:#b2c6fb;border-radius:6px"></div>
<svg class="a" style="left:2534px;top:521px" width="15" height="14" viewBox="0 0 15 14"><path d="M1 1 H14 V10 H9 L7.5 12.5 L6 10 H1Z M4 4.5 H11 M4 7 H8" fill="none" stroke="#fff" stroke-width="1.3"/></svg>
<div class="a" style="left:2534px;top:540px;line-height:18px;font-size:14px;color:#fff;font-weight:bold">帮</div>
<div class="a" style="left:2534px;top:562px;line-height:18px;font-size:14px;color:#fff;font-weight:bold">助</div>
<div class="a" style="left:2534px;top:584px;line-height:18px;font-size:14px;color:#fff;font-weight:bold">中</div>
<div class="a" style="left:2534px;top:606px;line-height:18px;font-size:14px;color:#fff;font-weight:bold">心</div>
<div class="a" style="left:2526px;top:643px;width:40px;height:119px;background:#fff;border-radius:6px;box-shadow:0 0 4px rgba(0,0,0,0.12)"></div>
<svg class="a" style="left:2532px;top:669px" width="20" height="20" viewBox="0 0 20 20"><path d="M3.6 10.5 V9 C3.6 5.2 6.5 2.2 10 2.2 C13.5 2.2 16.4 5.2 16.4 9 V10.5" fill="none" stroke="#5f626b" stroke-width="1.5"/><rect x="1.6" y="9.2" width="2.6" height="5" rx="1.2" fill="none" stroke="#5f626b" stroke-width="1.4"/><rect x="15.8" y="9.2" width="2.6" height="5" rx="1.2" fill="none" stroke="#5f626b" stroke-width="1.4"/><path d="M7.2 13.6 C8.8 15 11.2 15 12.8 13.6" fill="none" stroke="#5f626b" stroke-width="1.5" stroke-linecap="round"/></svg>
<div class="a" style="left:2534px;top:692px;line-height:18px;font-size:14px;color:#222">客</div>
<div class="a" style="left:2534px;top:714px;line-height:18px;font-size:14px;color:#222">服</div>
</body></html>
